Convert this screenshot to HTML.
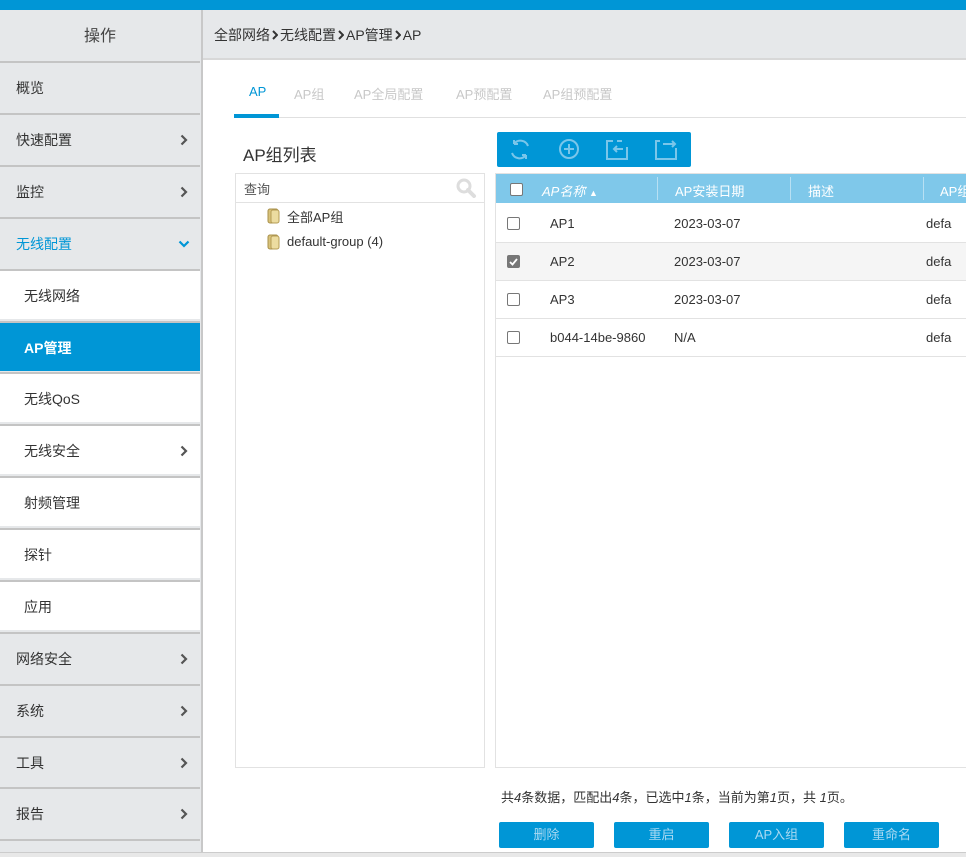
<!DOCTYPE html>
<html><head><meta charset="utf-8"><style>
*{margin:0;padding:0;box-sizing:border-box}
body{width:966px;height:857px;overflow:hidden;background:#fff;font-family:"Liberation Sans","Noto Sans CJK SC",sans-serif;font-size:13px;color:#333;position:relative}
.abs{position:absolute;white-space:nowrap}
.top{left:0;top:0;width:966px;height:10px;background:#0096d6}
.side{left:0;top:10px;width:201px;height:842px;background:#e6e8ea}
.sep{left:201px;top:10px;width:2px;height:842px;background:#c8c8c8}
.hd{left:0;top:11px;width:200px;height:51px;text-align:center;line-height:51px;font-size:16px;color:#444}
.it{left:0;width:200px;height:50px;line-height:50px;padding-left:16px;font-size:14px;color:#333;border-top:2px solid #c4c4c4}
.it.sub{background:#fff;padding-left:24px}
.it.act{background:#0096d6;color:#fff;font-weight:bold}
.it.blue{color:#0096d6}
.chev{position:absolute;right:12px;top:19px}
.bc{left:203px;top:10px;width:763px;height:50px;background:#e6e8ea;border-bottom:2px solid #d8d8d8;line-height:50px;padding-left:11px;font-size:14px;color:#333}
.bc svg{margin:0 2px}
.tab{top:84px;font-size:13px;color:#c8c8c8}
.bot{left:0;top:852px;width:966px;height:5px;background:#e8e8e8;border-top:1px solid #ccc}
.row{left:496px;width:470px;height:38px;border-bottom:1px solid #e2e2e2;font-size:13px;color:#333}
.row span{position:absolute;top:0;line-height:38px}
.cb{position:absolute;left:11px;top:12px;width:13px;height:13px;border:1px solid #777;border-radius:2px;background:#fff}
.btn{top:822px;width:95px;height:26px;background:#0096d6;border-radius:2px;color:#a9d9f2;text-align:center;line-height:26px;font-size:13px}
</style></head><body>
<svg width="0" height="0" style="position:absolute"><defs><symbol id="cv" viewBox="0 0 8 12"><path d="M1.5 1.5L6 6l-4.5 4.5" fill="none" stroke="#555" stroke-width="2.2"/></symbol></defs></svg>
<div class="abs top"></div>
<div class="abs side"></div>
<div class="abs sep"></div>
<div class="abs hd">操作</div>
<div class="abs it" style="top:61px">概览</div>
<div class="abs it" style="top:113px">快速配置<svg class="chev" width="8" height="12"><use href="#cv"/></svg></div>
<div class="abs it" style="top:165px">监控<svg class="chev" width="8" height="12"><use href="#cv"/></svg></div>
<div class="abs it blue" style="top:217px">无线配置<svg class="chev" style="top:21px;right:10px" width="12" height="8"><path d="M1.5 1.5L6 6l4.5-4.5" fill="none" stroke="#0096d6" stroke-width="2.2"/></svg></div>
<div class="abs it sub" style="top:269px">无线网络</div>
<div class="abs it sub act" style="top:321px">AP管理</div>
<div class="abs it sub" style="top:372px">无线QoS</div>
<div class="abs it sub" style="top:424px">无线安全<svg class="chev" width="8" height="12"><use href="#cv"/></svg></div>
<div class="abs it sub" style="top:476px">射频管理</div>
<div class="abs it sub" style="top:528px">探针</div>
<div class="abs it sub" style="top:580px">应用</div>
<div class="abs it" style="top:632px">网络安全<svg class="chev" width="8" height="12"><use href="#cv"/></svg></div>
<div class="abs it" style="top:684px">系统<svg class="chev" width="8" height="12"><use href="#cv"/></svg></div>
<div class="abs it" style="top:736px">工具<svg class="chev" width="8" height="12"><use href="#cv"/></svg></div>
<div class="abs it" style="top:787px">报告<svg class="chev" width="8" height="12"><use href="#cv"/></svg></div>
<div class="abs" style="left:0;top:839px;width:200px;height:2px;background:#c4c4c4"></div>

<div class="abs bc">全部网络<svg width="6" height="10"><path d="M1 1l4 4-4 4" fill="none" stroke="#333" stroke-width="2"/></svg>无线配置<svg width="6" height="10"><path d="M1 1l4 4-4 4" fill="none" stroke="#333" stroke-width="2"/></svg>AP管理<svg width="6" height="10"><path d="M1 1l4 4-4 4" fill="none" stroke="#333" stroke-width="2"/></svg>AP</div>

<div class="abs tab" style="left:249px;color:#0096d6">AP</div>
<div class="abs tab" style="left:294px">AP组</div>
<div class="abs tab" style="left:354px">AP全局配置</div>
<div class="abs tab" style="left:456px">AP预配置</div>
<div class="abs tab" style="left:543px">AP组预配置</div>
<div class="abs" style="left:234px;top:117px;width:732px;height:1px;background:#e0e0e0"></div>
<div class="abs" style="left:234px;top:114px;width:45px;height:4px;background:#0096d6"></div>

<div class="abs" style="left:243px;top:141px;font-size:17px;color:#333">AP组列表</div>
<div class="abs" style="left:235px;top:173px;width:250px;height:595px;border:1px solid #e2e2e2"></div>
<div class="abs" style="left:236px;top:202px;width:248px;height:1px;background:#e2e2e2"></div>
<div class="abs" style="left:244px;top:179px;font-size:13px;color:#555">查询</div>
<svg class="abs" style="left:456px;top:178px" width="22" height="20"><circle cx="8" cy="8" r="6" fill="none" stroke="#ddd" stroke-width="3"/><path d="M12 12l6 6" stroke="#ddd" stroke-width="4" stroke-linecap="round"/></svg>
<svg class="abs" style="left:265px;top:207px" width="18" height="18"><rect x="3" y="2" width="10" height="14" rx="2" fill="#d8c27a" stroke="#a8904a"/><rect x="6" y="3" width="8" height="13" rx="2" fill="#ecdca0" stroke="#b59c55"/></svg>
<div class="abs" style="left:287px;top:207px;font-size:13px">全部AP组</div>
<svg class="abs" style="left:265px;top:233px" width="18" height="18"><rect x="3" y="2" width="10" height="14" rx="2" fill="#d8c27a" stroke="#a8904a"/><rect x="6" y="3" width="8" height="13" rx="2" fill="#ecdca0" stroke="#b59c55"/></svg>
<div class="abs" style="left:287px;top:234px;font-size:13px">default-group (4)</div>

<div class="abs" style="left:497px;top:132px;width:194px;height:35px;background:#0096d6;border-radius:2px"></div>
<svg class="abs" style="left:497px;top:132px" width="194" height="35" fill="none" stroke="#7ac6ea" stroke-width="2">
<path d="M31 14a8 8 0 0 0-14-2M17 12v-4M17 12h4M15 21a8 8 0 0 0 14 2M29 23v4M29 23h-4"/>
<circle cx="72" cy="17" r="9"/><path d="M72 12v10M67 17h10"/>
<path d="M116 9h-6v18h20v-12M120 14l-3 3 3 3M117 17h9" /><path d="M125 9l-5 0"/>
<path d="M163 9h-4v18h20v-11M166 12h12M175 9l3 3-3 3"/>
</svg>

<div class="abs" style="left:495px;top:173px;width:471px;height:595px;border:1px solid #e2e2e2;border-right:none"></div>
<div class="abs" style="left:496px;top:174px;width:470px;height:29px;background:#7fc8ea;color:#fff;font-size:13px;overflow:hidden">
<div class="cb" style="left:14px;top:9px;width:13px;height:13px"></div>
<span class="abs" style="left:46px;top:7px;font-style:italic">AP名称 <span style="font-size:9px;font-style:normal">&#x25B2;</span></span>
<div class="abs" style="left:161px;top:3px;width:1px;height:23px;background:#b8e0f3"></div>
<span class="abs" style="left:179px;top:7px">AP安装日期</span>
<div class="abs" style="left:294px;top:3px;width:1px;height:23px;background:#b8e0f3"></div>
<span class="abs" style="left:312px;top:7px">描述</span>
<div class="abs" style="left:427px;top:3px;width:1px;height:23px;background:#b8e0f3"></div>
<span class="abs" style="left:444px;top:7px">AP组</span>
</div>
<div class="abs row" style="top:205px"><div class="cb"></div><span style="left:54px">AP1</span><span style="left:178px">2023-03-07</span><span style="left:430px">defa</span></div>
<div class="abs row" style="top:243px;background:#f5f5f5"><div class="cb" style="background:#777"><svg width="11" height="11" style="display:block"><path d="M2 6l2.5 2.5L9 3" stroke="#fff" stroke-width="1.8" fill="none"/></svg></div><span style="left:54px">AP2</span><span style="left:178px">2023-03-07</span><span style="left:430px">defa</span></div>
<div class="abs row" style="top:281px"><div class="cb"></div><span style="left:54px">AP3</span><span style="left:178px">2023-03-07</span><span style="left:430px">defa</span></div>
<div class="abs row" style="top:319px"><div class="cb"></div><span style="left:54px">b044-14be-9860</span><span style="left:178px">N/A</span><span style="left:430px">defa</span></div>

<div class="abs" style="left:501px;top:787px;font-size:13px;color:#333">共<i>4</i>条数据，匹配出<i>4</i>条，已选中<i>1</i>条，当前为第<i>1</i>页，共 <i>1</i>页。</div>
<div class="abs btn" style="left:499px">删除</div>
<div class="abs btn" style="left:614px">重启</div>
<div class="abs btn" style="left:729px">AP入组</div>
<div class="abs btn" style="left:844px">重命名</div>
<div class="abs bot"></div>
</body></html>
